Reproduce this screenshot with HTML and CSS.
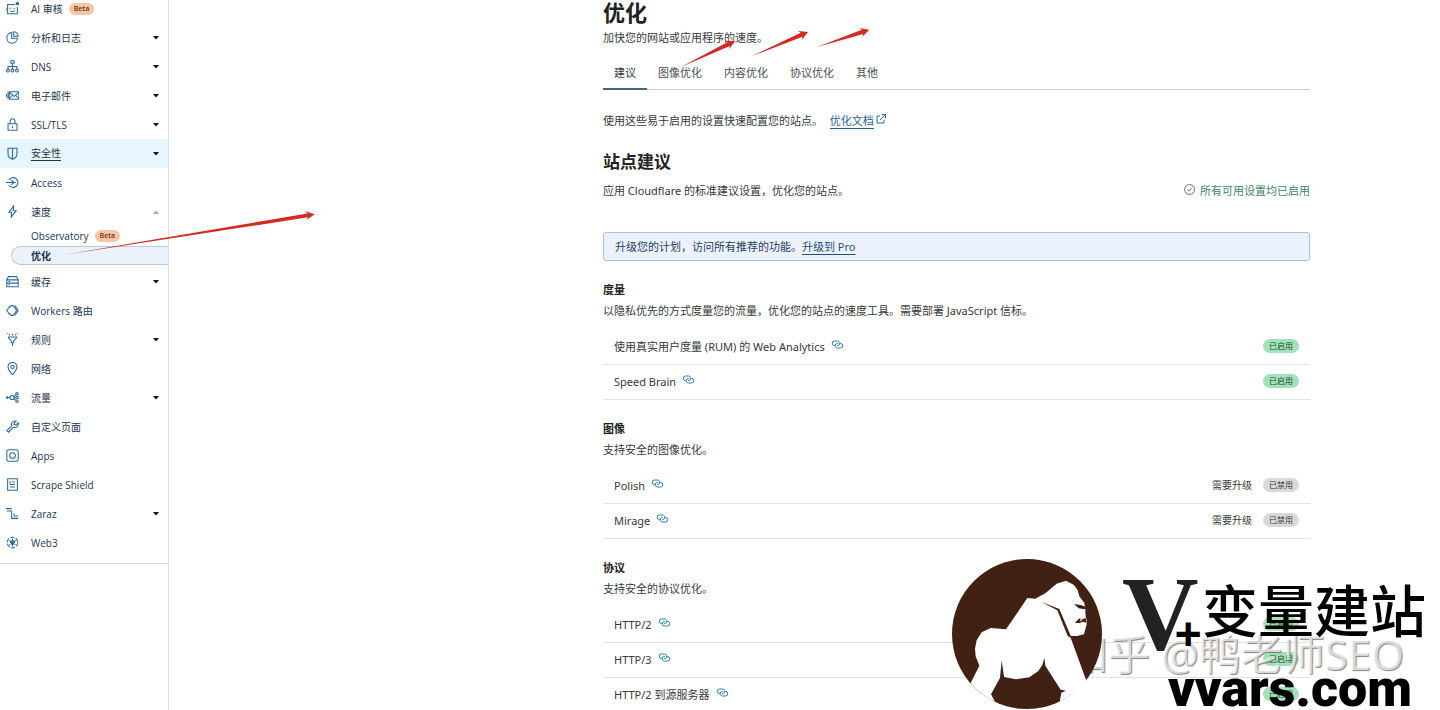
FILE: index.html
```html
<!DOCTYPE html>
<html lang="zh-CN">
<head>
  <meta charset="UTF-8">
  <meta name="viewport" content="width=device-width, initial-scale=1.0">
  <title>优化 - 速度</title>
  <link rel="stylesheet" href="styles.css">
</head>
<body>
  <svg class="defs" aria-hidden="true">
    <symbol id="caret" viewBox="0 0 6 4"><path d="M0 0h6L3 3.6z"/></symbol>
    <symbol id="caret-up" viewBox="0 0 6 4"><path d="M0 4h6L3 .4z"/></symbol>
    <symbol id="link" viewBox="0 0 26 18"><path d="M9 11H7a4.500 4.500 0 0 1 0-9h6a4.500 4.500 0 0 1 3 8q-1.500 1.500-3.500 1M17 7h2a4.500 4.500 0 0 1 0 9h-6a4.500 4.500 0 0 1-3-8q1.500-1.500 3.500-1"/></symbol>
  </svg>

  <div class="page">
    <nav class="sidebar">
      <ul class="menu">
        <li><a class="item" href="#"><svg class="icon" viewBox="0 0 16 16"><path d="M11 3H2v11.500h12V6M5 7v1.500M10 7v1.500M5 10.500q3 2.500 6 0M0 7v4"/><circle cx="14" cy="2" r="1.500" fill="currentColor"/></svg>AI 审核<span class="beta">Beta</span></a></li>
        <li><a class="item" href="#"><svg class="icon" viewBox="0 0 16 16"><path d="M7 2a6.500 6.500 0 1 0 7 7H7zM9.500 1v5.500H15A6 6 0 0 0 9.500 1z"/></svg>分析和日志<svg class="caret"><use href="#caret"/></svg></a></li>
        <li><a class="item" href="#"><svg class="icon" viewBox="0 0 16 16"><path d="M6 1h4v3H6zM8 4v7M2.500 11V8h11v3"/><circle cx="2.500" cy="13" r="1.800"/><circle cx="8" cy="13" r="1.800"/><circle cx="13.500" cy="13" r="1.800"/></svg>DNS<svg class="caret"><use href="#caret"/></svg></a></li>
        <li><a class="item" href="#"><svg class="icon" viewBox="0 0 16 16"><path d="M4 3.500h12v9H4zM4 4l6 5 6-5M4 12l4-4M16 12l-4-4M2.500 4v8M.5 6v4"/></svg>电子邮件<svg class="caret"><use href="#caret"/></svg></a></li>
        <li><a class="item" href="#"><svg class="icon" viewBox="0 0 16 16"><path d="M2.500 7h11v8h-11zM5 7V4a3 3 0 0 1 6 0v3M8 10v2.500"/></svg>SSL/TLS<svg class="caret"><use href="#caret"/></svg></a></li>
        <li><a class="item hovered" href="#"><svg class="icon" viewBox="0 0 16 16"><path d="M2.500 1.500h11V9c0 3-2.500 5-5.500 6-3-1-5.500-3-5.500-6zM8 1.500V15"/></svg><span class="name">安全性</span><svg class="caret"><use href="#caret"/></svg></a></li>
        <li><a class="item" href="#"><svg class="icon" viewBox="0 0 16 16"><path d="M3.500 5a6 6 0 1 1 0 6M0 8h9M6.500 5L10 8l-3.500 3M10 8h2"/></svg>Access</a></li>
        <li>
          <a class="item" href="#"><svg class="icon" viewBox="0 0 16 16"><path d="M9.500 1L3.500 9H7l-.5 6 6-8H9z"/></svg>速度<svg class="caret faded"><use href="#caret-up"/></svg></a>
          <ul class="submenu">
            <li><a class="subitem" href="#">Observatory<span class="beta">Beta</span></a></li>
            <li><a class="subitem current" href="#">优化</a></li>
          </ul>
        </li>
        <li><a class="item" href="#"><svg class="icon" viewBox="0 0 16 16"><path d="M1 6l2-4h10l2 4M1 6h14v4H1zM1 10h14v4.500H1zM3 8h2M3 12h2"/></svg>缓存<svg class="caret"><use href="#caret"/></svg></a></li>
        <li><a class="item" href="#"><svg class="icon" viewBox="0 0 16 16"><path d="M5 2.500L1 8l4 5.500M6 2h3l4 6-4 6H6M11 2l4 6-4 6M6 2L4 5M6 14l-2-3"/></svg>Workers 路由</a></li>
        <li><a class="item" href="#"><svg class="icon" viewBox="0 0 16 16"><path d="M3 5h10v1L9.500 9.500V12h-3V9.500L3 6zM8 12v4M4 1v2M8 1v2M12 1v2M2 0v1M14 0v1"/></svg>规则<svg class="caret"><use href="#caret"/></svg></a></li>
        <li><a class="item" href="#"><svg class="icon" viewBox="0 0 16 16"><path d="M8 15.500C4.500 11.500 2.500 9 2.500 6a5.500 5.500 0 0 1 11 0c0 3-2 5.500-5.500 9.500z"/><circle cx="8" cy="6" r="2"/></svg>网络</a></li>
        <li><a class="item" href="#"><svg class="icon" viewBox="0 0 16 16"><path d="M0 8h5M10 7l2-2.500M10 9l2 2.500M10 8h2"/><circle cx="7.500" cy="8" r="2.500"/><circle cx="13.500" cy="3.500" r="1.500"/><circle cx="13.800" cy="8" r="1.500"/><circle cx="13.500" cy="12.500" r="1.500"/><circle cx="1.500" cy="8" r="1"/></svg>流量<svg class="caret"><use href="#caret"/></svg></a></li>
        <li><a class="item" href="#"><svg class="icon" viewBox="0 0 16 16"><path d="M12.500 1.500a4.500 4.500 0 0 0-5.500 6L1 13l2 2 6-6a4.500 4.500 0 0 0 6-5.500L12.500 6 10 5.500V4z"/></svg>自定义页面</a></li>
        <li><a class="item" href="#"><svg class="icon" viewBox="0 0 16 16"><rect x="1" y="1" width="14" height="14" rx="2"/><circle cx="8" cy="8" r="3.500"/></svg>Apps</a></li>
        <li><a class="item" href="#"><svg class="icon" viewBox="0 0 16 16"><path d="M2 1h12v14H2zM5 4v4M7 5h4M5 8h6M5 11h6"/></svg>Scrape Shield</a></li>
        <li><a class="item" href="#"><svg class="icon" viewBox="0 0 16 16"><path d="M0 2h7M1 5h6M7 5v9h8M10 8v3h5"/></svg>Zaraz<svg class="caret"><use href="#caret"/></svg></a></li>
        <li><a class="item" href="#"><svg class="icon" viewBox="0 0 16 16"><circle cx="8" cy="8" r="6.500" stroke-dasharray="5 1.800"/><path d="M8 3v10M4 5.500l8 5M12 5.500l-8 5M8 5l2.500 3L8 11 5.500 8z"/></svg>Web3</a></li>
      </ul>
    </nav>

    <main class="content">
      <h1>优化</h1>
      <p class="lead">加快您的网站或应用程序的速度。</p>
      <nav class="tabs">
        <a class="tab active" href="#">建议</a>
        <a class="tab" href="#">图像优化</a>
        <a class="tab" href="#">内容优化</a>
        <a class="tab" href="#">协议优化</a>
        <a class="tab" href="#">其他</a>
      </nav>
      <p class="intro">使用这些易于启用的设置快速配置您的站点。 <a class="doc" href="#">优化文档</a><svg class="external" viewBox="0 0 20 20"><path d="M8 4H2v14h14v-6M11 1h8v8M19 1L8 12"/></svg></p>

      <h2>站点建议</h2>
      <div class="summary">
        <p>应用 Cloudflare 的标准建议设置，优化您的站点。</p>
        <p class="all-on"><svg class="check" viewBox="0 0 20 20"><circle cx="10" cy="10" r="9"/><path d="M6 10l3 3 5-6"/></svg>所有可用设置均已启用</p>
      </div>
      <div class="banner">升级您的计划，访问所有推荐的功能。<a href="#">升级到 Pro</a></div>

      <section class="group">
        <h3>度量</h3>
        <p>以隐私优先的方式度量您的流量，优化您的站点的速度工具。需要部署 JavaScript 信标。</p>
        <ul class="settings">
          <li>使用真实用户度量 (RUM) 的 Web Analytics<svg class="link"><use href="#link"/></svg><span class="status on">已启用</span></li>
          <li>Speed Brain<svg class="link"><use href="#link"/></svg><span class="status on">已启用</span></li>
        </ul>
      </section>
      <section class="group">
        <h3>图像</h3>
        <p>支持安全的图像优化。</p>
        <ul class="settings">
          <li>Polish<svg class="link"><use href="#link"/></svg><span class="upgrade">需要升级</span><span class="status">已禁用</span></li>
          <li>Mirage<svg class="link"><use href="#link"/></svg><span class="upgrade">需要升级</span><span class="status">已禁用</span></li>
        </ul>
      </section>
      <section class="group">
        <h3>协议</h3>
        <p>支持安全的协议优化。</p>
        <ul class="settings">
          <li>HTTP/2<svg class="link"><use href="#link"/></svg><span class="status on">已启用</span></li>
          <li>HTTP/3<svg class="link"><use href="#link"/></svg><span class="status on">已启用</span></li>
          <li>HTTP/2 到源服务器<svg class="link"><use href="#link"/></svg><span class="status on">已启用</span></li>
        </ul>
      </section>
    </main>
  </div>

  <!-- red pointer arrows -->
  <svg class="arrows" width="900" height="300" aria-hidden="true">
    <path transform="translate(63 255) rotate(-9.2)" d="M0 0L248-2 246-4.500 255 0 246 4.500 248 2z"/>
    <path transform="translate(681 67) rotate(-25.6)" d="M0 0L53-2.200 51-4.800 60 0 51 4.800 53 2.200z"/>
    <path transform="translate(752 56) rotate(-23.2)" d="M0 0L54-2.200 52-4.800 61 0 52 4.800 54 2.200z"/>
    <path transform="translate(817 47) rotate(-18.3)" d="M0 0L48-2.200 46-4.800 55 0 46 4.800 48 2.200z"/>
  </svg>

  <div class="watermark">知乎 @鸭老师SEO</div>
  <div class="brand">
    <svg class="gorilla" viewBox="66 56 450 450">
      <clipPath id="disc"><circle cx="291" cy="281" r="225"/></clipPath>
      <g clip-path="url(#disc)">
        <path fill="#412114" d="M66 56h450v450H66z"/>
        <path fill="#fff" d="M122 428L148 376 137 348 135 325 140 300 155 276 182 263 228 267 292 173 316 175 347 158 380 130 408 121 432 134 443 150 448 168 463 188 466 208 467 230 471 240 470 252 462 282 441 287 420 287 468 418 516 430V520H66V428z"/>
        <path fill="#412114" d="M215 360L222 410 258 417 298 411 325 392 337 374 343 352 346 376 392 448 408 451 394 457 389 485 340 520H240L195 485 183 462 210 412zM333 184L388 206 425 293 413 287 382 210zM432 191L452 194 468 200 464 207 446 204zM435 248L446 235 452 234 450 244 459 235 468 234 470 247 458 244 450 248z"/>
      </g>
      <path fill="#fff" d="M468 420L425 462 389 486 340 506H516V420z"/>
    </svg>
    <div class="brand-text">
      <div class="brand-name"><span class="brand-v">V</span><span class="brand-plus">+</span><span class="brand-cn">变量建站</span></div>
      <div class="brand-url">vvars.com</div>
    </div>
  </div>
</body>
</html>
```
FILE: styles.css
```css
* { box-sizing: border-box; }
body { margin: 0; height: 100vh; overflow: hidden; position: relative; background-color: #fff; color: #36393a; font-family: "Noto Sans", "Noto Sans CJK SC", sans-serif; font-size: 11px; line-height: 20px; }
h1, h2, h3, p, ul { margin: 0; padding: 0; }
ul { list-style: none; }
svg { fill: none; flex: none; }
.defs { position: absolute; width: 0; height: 0; }
.page { display: flex; min-height: 100vh; }

/* sidebar, scrolled a little */
.sidebar { width: 169px; flex: none; border-right: 1px solid #dcdfe2; font-family: "Open Sans", "Noto Sans CJK SC", sans-serif; }
.menu { margin-top: -6px; padding-bottom: 6px; border-bottom: 1px solid #dcdfe2; font-size: 10px; }
.item { display: flex; align-items: center; height: 29px; padding: 0 9px 0 6px; color: #26344f; text-decoration: none; }
.item.hovered { background-color: #e6f5fe; }
.hovered .name { line-height: 13px; border-bottom: 1px solid #26344f; }
.icon { width: 13px; height: 13px; margin-right: 12px; color: #2c6a9e; stroke: currentColor; stroke-width: 1.3; }
.caret { width: 6px; height: 4px; margin-left: auto; fill: #111; }
.caret.faded { fill: #a5a9ae; }
.beta { margin-left: 6px; padding: 0 5px; border-radius: 6px; background-color: #f6c6a4; color: #6b3413; font-size: 7px; font-weight: 600; line-height: 12px; }
.submenu { padding-bottom: 2px; }
.subitem { display: flex; align-items: center; height: 20px; margin-left: 11px; padding-left: 20px; color: #26344f; text-decoration: none; }
.subitem.current { height: 19px; border: 1px solid #b5cbe6; border-right: 0; border-radius: 10px 0 0 10px; padding-left: 19px; background-color: #ebf2fc; font-weight: bold; }

.content { flex: 1; padding: 0 130px 0 434px; }
h1 { font-size: 22px; line-height: 24px; color: #222; }
.lead { margin-top: 4px; }
.tabs { display: flex; margin-top: 8px; border-bottom: 1px solid #c9cccf; }
.tab { padding: 7px 11px 5px; margin-bottom: -1px; border-bottom: 2px solid transparent; color: #4a4e51; text-decoration: none; }
.tab.active { border-bottom-color: #3d6a8e; color: #36393a; }
.intro { margin-top: 21px; }
.doc { margin-left: 4px; color: #1f5f99; text-underline-offset: 3px; }
.external { width: 10px; height: 10px; margin-left: 2px; vertical-align: 1px; stroke: #1f6fa8; stroke-width: 2; }
h2 { margin-top: 19px; font-size: 17px; line-height: 24px; color: #222; }
.summary { display: flex; justify-content: space-between; margin-top: 7px; }
.all-on { display: flex; align-items: center; color: #3f8763; }
.check { width: 11px; height: 11px; margin: 0 5px 4px 0; stroke: #4b4f52; stroke-width: 1.5; }
.banner { margin-top: 31px; padding: 4px 11px; border: 1px solid #a9c2dc; border-radius: 3px; background-color: #ebf2fd; color: #26405f; line-height: 19px; }
.banner a { color: #1f5082; text-underline-offset: 3px; }

.group { margin-top: 18px; line-height: 21px; }
h3 { font-size: 11px; line-height: 21px; color: #222; }
.settings { margin-top: 9px; }
.settings li { display: flex; align-items: center; height: 35px; padding: 0 11px 2px; border-bottom: 1px solid #e0e2e4; }
.link { width: 13px; height: 9px; margin: 0 auto 3px 6px; stroke: #2c7cb0; stroke-width: 2; }
.upgrade { margin-right: 11px; font-size: 10px; }
.status { padding: 0 6px; border-radius: 7px; background-color: #d9d9d9; color: #36393a; font-size: 8px; line-height: 14px; }
.status.on { background-color: #a2e2bb; color: #1c4a30; }

.arrows { position: absolute; left: 0; top: 0; fill: #d42a20; }

/* logo over the bottom right corner */
.watermark { position: absolute; right: 36px; bottom: 28px; color: rgba(255, 255, 255, 0.7); font-size: 42px; line-height: 56px; text-shadow: 1px 1px 1px rgba(100, 100, 100, 0.8); white-space: nowrap; }
.brand { position: absolute; right: 14px; bottom: 0; display: flex; gap: 20px; height: 152px; color: #000; }
.gorilla { width: 150px; height: 150px; margin-top: 1px; }
.brand-name { display: flex; align-items: flex-end; height: 100px; font-weight: bold; }
.brand-v { font-family: "Liberation Serif", serif; font-size: 106px; line-height: 88px; color: #222; }
.brand-plus { margin-left: -24px; font-size: 48px; line-height: 50px; }
.brand-cn { font-family: "Noto Sans CJK SC", sans-serif; font-size: 56px; line-height: 100px; font-weight: 500; }
.brand-url { margin-left: 46px; font-family: Roboto, sans-serif; font-size: 52px; line-height: 62px; font-weight: 900; }
```
